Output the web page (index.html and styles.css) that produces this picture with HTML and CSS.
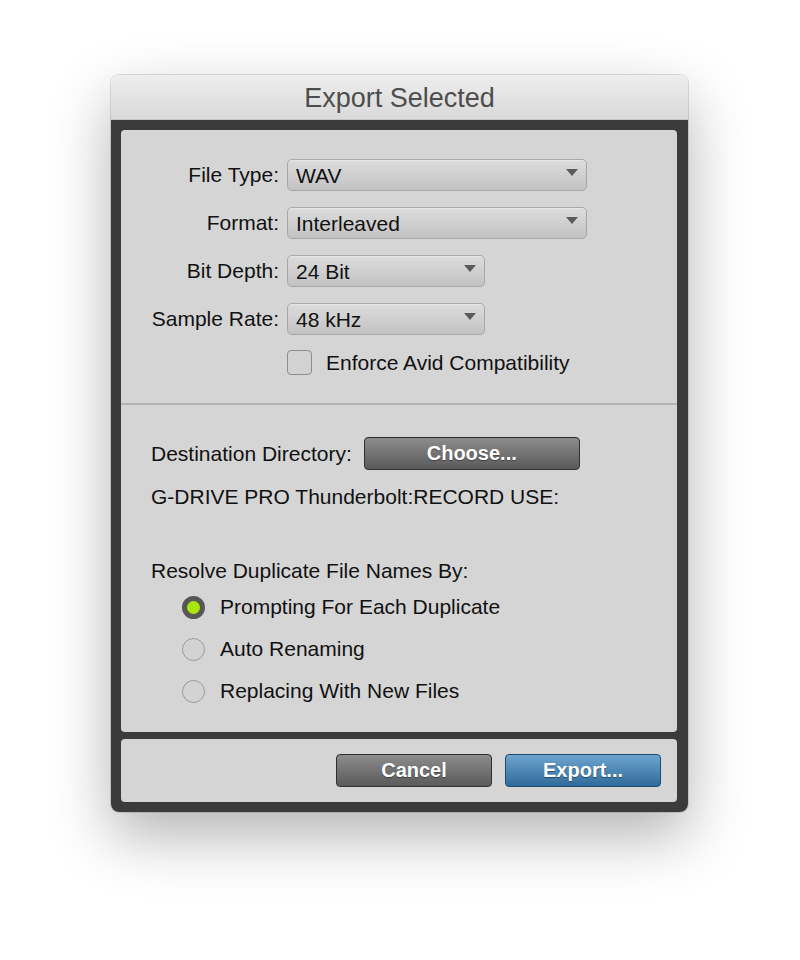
FILE: index.html
```html
<!DOCTYPE html>
<html lang="en">
<head>
    <meta charset="UTF-8">
    <meta name="viewport" content="width=device-width, initial-scale=1.0">
    <title>Export Selected</title>
    <link rel="stylesheet" href="styles.css">
</head>
<body>
    <div class="window">
        <div class="titlebar">Export Selected</div>

        <div class="frame">
            <div class="panel main-panel">

                <!-- file settings -->
                <div class="settings">
                    <div class="field">
                        <label class="field-label">File Type:</label>
                        <div class="select wide">WAV<span class="arrow"></span></div>
                    </div>
                    <div class="field">
                        <label class="field-label">Format:</label>
                        <div class="select wide">Interleaved<span class="arrow"></span></div>
                    </div>
                    <div class="field">
                        <label class="field-label">Bit Depth:</label>
                        <div class="select narrow">24 Bit<span class="arrow"></span></div>
                    </div>
                    <div class="field">
                        <label class="field-label">Sample Rate:</label>
                        <div class="select narrow">48 kHz<span class="arrow"></span></div>
                    </div>
                    <div class="field">
                        <span class="field-label"></span>
                        <div class="check-row">
                            <span class="checkbox"></span>
                            <span>Enforce Avid Compatibility</span>
                        </div>
                    </div>
                </div>

                <!-- destination -->
                <div class="destination">
                    <div class="dest-row">
                        <span>Destination Directory:</span>
                        <button class="btn btn-dark choose">Choose...</button>
                    </div>
                    <p class="path">G-DRIVE PRO Thunderbolt:RECORD USE:</p>

                    <p class="resolve">Resolve Duplicate File Names By:</p>
                    <div class="radios">
                        <div class="radio-row"><span class="radio checked"></span>Prompting For Each Duplicate</div>
                        <div class="radio-row"><span class="radio"></span>Auto Renaming</div>
                        <div class="radio-row"><span class="radio"></span>Replacing With New Files</div>
                    </div>
                </div>
            </div>

            <div class="panel footer">
                <button class="btn btn-dark">Cancel</button>
                <button class="btn btn-blue">Export...</button>
            </div>
        </div>
    </div>
</body>
</html>
```

FILE: styles.css
```css
body {
    font-family: 'Liberation Sans', Arial, sans-serif;
    background: #ffffff;
    color: #111;
    margin: 0;
    padding: 75px 0 0 111px;
    min-height: 960px;
    box-sizing: border-box;
}

/* Pencere */
.window {
    width: 577px;
    border-radius: 8px;
    overflow: hidden;
    box-shadow: 0 24px 60px rgba(0, 0, 0, 0.3), 0 0 0 1px rgba(0, 0, 0, 0.12);
}

.titlebar {
    height: 44px;
    line-height: 47px;
    text-align: center;
    font-size: 27px;
    color: #4d4d4d;
    background: linear-gradient(#eeeeee, #d9d9d9);
    border-bottom: 1px solid #c4c4c4;
}

.frame {
    background: #3b3b3b;
    padding: 10px 11px 10px 10px;
    display: flex;
    flex-direction: column;
    gap: 7px;
}

.panel {
    background: #d5d5d5;
    border-radius: 4px;
}

/* Ayarlar */
.settings {
    padding: 29px 0 28px;
    border-bottom: 2px solid #b3b3b3;
    display: flex;
    flex-direction: column;
    gap: 16px;
}

.field {
    display: flex;
    align-items: center;
    gap: 8px;
    font-size: 21px;
}

.field-label {
    width: 158px;
    text-align: right;
}

.select {
    position: relative;
    height: 30px;
    line-height: 31px;
    padding-left: 8px;
    border: 1px solid #a7a7a7;
    border-radius: 5px;
    background: linear-gradient(#dcdcdc, #c3c3c3);
    box-shadow: inset 0 1px 0 rgba(255, 255, 255, 0.35);
    box-sizing: content-box;
}

.select.wide { width: 290px; }
.select.narrow { width: 188px; }

.arrow {
    position: absolute;
    right: 8px;
    top: 9px;
    border-left: 6px solid transparent;
    border-right: 6px solid transparent;
    border-top: 7px solid #5b5b5b;
}

.check-row {
    display: flex;
    align-items: center;
    gap: 14px;
    margin-top: -1px;
}

.checkbox {
    width: 23px;
    height: 23px;
    border: 1px solid #8e8e8e;
    border-radius: 4px;
    background: #d2d2d2;
}

/* Hedef klasör */
.destination {
    padding: 32px 0 29px 30px;
    font-size: 21px;
    line-height: 24px;
}

.dest-row {
    display: flex;
    align-items: center;
    gap: 12px;
}

.path {
    margin: 15px 0 0;
}

.resolve {
    margin: 50px 0 0;
}

.radios {
    margin: 12px 0 0 31px;
    display: flex;
    flex-direction: column;
    gap: 18px;
}

.radio-row {
    display: flex;
    align-items: center;
    gap: 15px;
}

.radio {
    width: 23px;
    height: 23px;
    border-radius: 50%;
    border: 1px solid #9a9a9a;
    background: #d3d3d3;
    box-sizing: border-box;
}

.radio.checked {
    border: 5px solid #575757;
    background: #a8e60c;
}

/* Butonlar */
.btn {
    height: 33px;
    font-family: 'Liberation Sans', Arial, sans-serif;
    font-size: 20px;
    font-weight: bold;
    color: #fff;
    border-radius: 4px;
    cursor: pointer;
    text-shadow: 0 1px 1px rgba(0, 0, 0, 0.4);
    padding: 0;
}

.btn-dark {
    background: linear-gradient(#8c8c8c, #5a5a5a);
    border: 1px solid #2f2f2f;
}

.btn-blue {
    background: linear-gradient(#6ea5cf, #2f6b9b);
    border: 1px solid #1d4a6e;
}

.choose {
    width: 216px;
}

.footer {
    height: 63px;
    display: flex;
    justify-content: flex-end;
    align-items: center;
    gap: 13px;
    padding-right: 16px;
}

.footer .btn {
    width: 156px;
}
```
